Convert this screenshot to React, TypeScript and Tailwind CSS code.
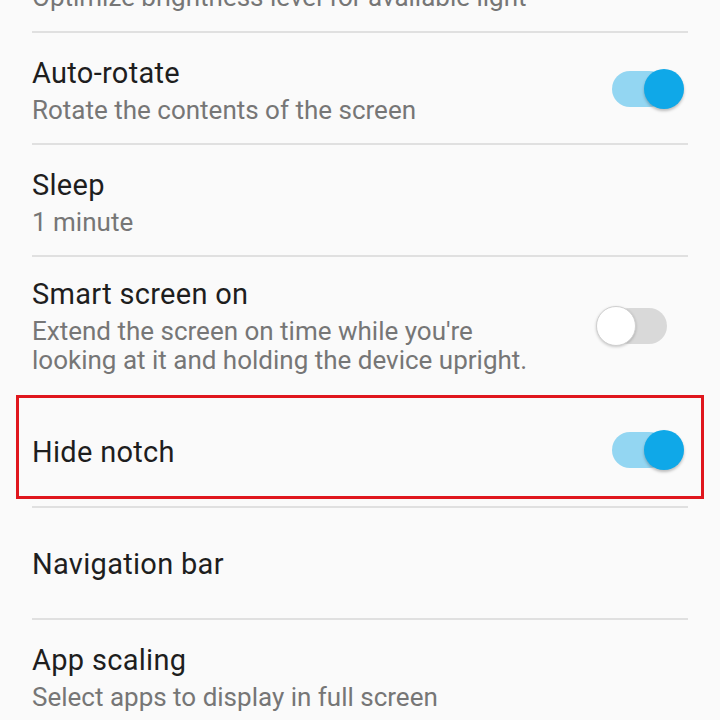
const font = { fontFamily: 'Roboto, "Noto Sans", sans-serif' };

function Toggle({ on }: { on: boolean }) {
  return (
    <div className="relative w-[88px] h-[40px] shrink-0">
      <div
        className={`absolute left-[16px] top-[2px] w-[55px] h-[36px] rounded-full ${
          on ? 'bg-[#93d6f2]' : 'bg-[#d9d9d9]'
        }`}
      ></div>
      <div
        className={`absolute top-0 w-[40px] h-[40px] rounded-full ${
          on
            ? 'right-0 bg-[#0fa8e8] shadow-[0_2px_3px_rgba(0,0,0,0.25)]'
            : 'left-0 bg-white border border-[#d0d0d0] shadow-[0_1px_3px_rgba(0,0,0,0.2)]'
        }`}
      ></div>
    </div>
  );
}

function Divider() {
  return <div className="mx-8 h-[2px] bg-[#e0e0e0]"></div>;
}

function Title({ children }: { children: React.ReactNode }) {
  return (
    <div className="text-[29px] leading-[36px] tracking-[0.3px] text-[#1e1e1e]">{children}</div>
  );
}

function Sub({ children }: { children: React.ReactNode }) {
  return <div className="mt-[5px] text-[26px] leading-[29px] text-[#767676]">{children}</div>;
}

export default function App() {
  return (
    <div className="w-[720px] h-[720px] overflow-hidden bg-[#fafafa]" style={font}>
      {/* cut-off previous row */}
      <div className="h-[31px] overflow-hidden px-8">
        <div className="mt-[-17px] text-[26px] leading-[29px] text-[#767676]">
          Optimize brightness level for available light
        </div>
      </div>
      <Divider />

      <div className="h-[110px] flex items-center justify-between pl-8 pr-9 pt-[22px] pb-[20px] box-border">
        <div className="self-start">
          <Title>Auto-rotate</Title>
          <Sub>Rotate the contents of the screen</Sub>
        </div>
        <Toggle on />
      </div>
      <Divider />

      <div className="h-[110px] flex items-start pl-8 pr-9 pt-[22px] box-border">
        <div>
          <Title>Sleep</Title>
          <Sub>1 minute</Sub>
        </div>
      </div>
      <Divider />

      <div className="h-[137px] flex items-center justify-between pl-8 pr-9 box-border">
        <div className="self-start pt-[19px]">
          <Title>Smart screen on</Title>
          <Sub>
            Extend the screen on time while you're
            <br />
            looking at it and holding the device upright.
          </Sub>
        </div>
        <Toggle on={false} />
      </div>

      <div className="pt-[1px] pb-[7px]">
        <div className="mx-4 h-[104px] border-[3px] border-[#e0171d] flex items-center justify-between pl-[13px] pr-[17px] pt-[6px]">
          <div className="pt-[4px]">
            <Title>Hide notch</Title>
          </div>
          <Toggle on />
        </div>
      </div>
      <Divider />

      <div className="h-[110px] flex items-center pl-8 pr-9 pt-[2px]">
        <Title>Navigation bar</Title>
      </div>
      <Divider />

      <div className="h-[110px] flex items-start pl-8 pr-9 pt-[22px] box-border">
        <div>
          <Title>App scaling</Title>
          <Sub>Select apps to display in full screen</Sub>
        </div>
      </div>
    </div>
  );
}
